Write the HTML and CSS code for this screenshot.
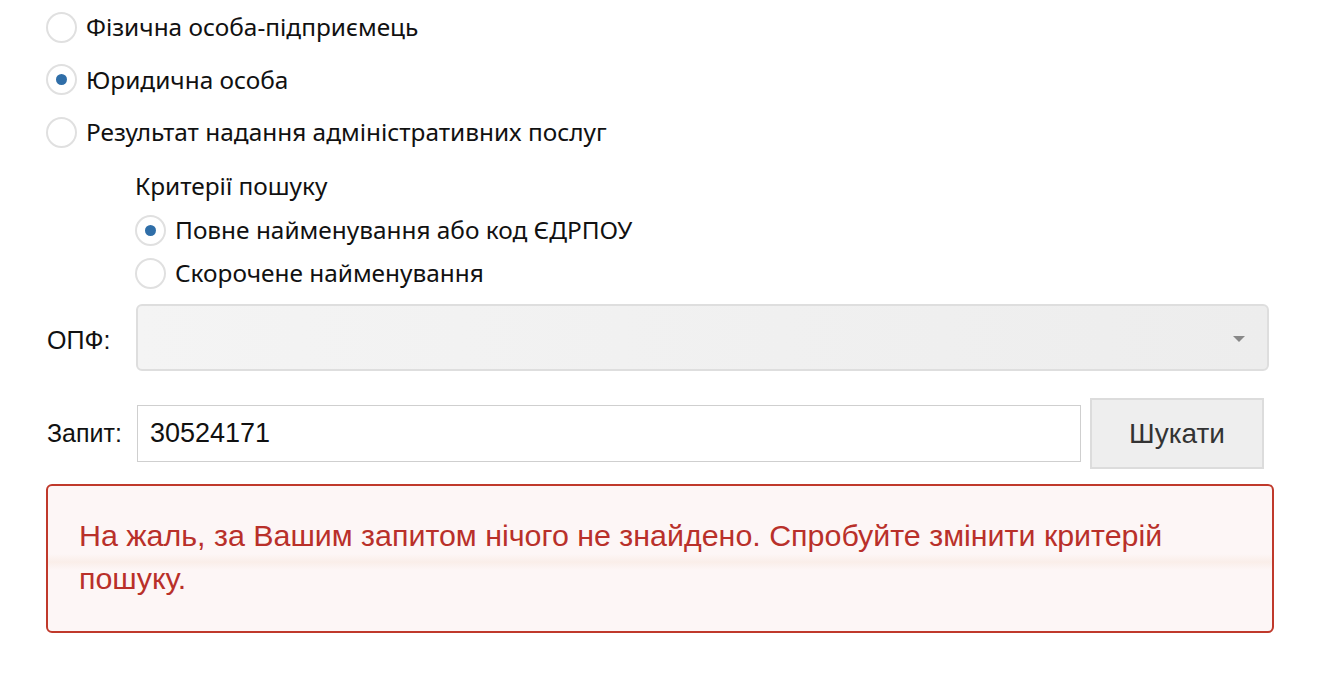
FILE: index.html
```html
<!DOCTYPE html>
<html lang="uk">
<head>
<meta charset="utf-8">
<link rel="stylesheet" href="styles.css">
</head>
<body>
<div class="page">
  <div class="types">
    <label class="radio"><span class="circle"></span><span class="rlabel">Фізична особа-підприємець</span></label>
    <label class="radio"><span class="circle checked"></span><span class="rlabel">Юридична особа</span></label>
    <label class="radio"><span class="circle"></span><span class="rlabel">Результат надання адміністративних послуг</span></label>
  </div>
  <div class="criteria">
    <div class="ctitle">Критерії пошуку</div>
    <div class="subs">
      <label class="radio sub"><span class="circle checked"></span><span class="rlabel">Повне найменування або код ЄДРПОУ</span></label>
      <label class="radio sub"><span class="circle"></span><span class="rlabel">Скорочене найменування</span></label>
    </div>
  </div>
  <div class="row opf">
    <span class="flabel">ОПФ:</span>
    <div class="select"><span class="caret"></span></div>
  </div>
  <div class="row query">
    <span class="flabel">Запит:</span>
    <div class="input">30524171</div>
    <div class="btn">Шукати</div>
  </div>
  <div class="alert">На жаль, за Вашим запитом нічого не знайдено. Спробуйте змінити критерій пошуку.</div>
</div>
</body>
</html>
```
FILE: styles.css
```css
html, body { margin: 0; padding: 0; background: #fff; }
body { font-family: "Noto Sans", "Liberation Sans", sans-serif; color: #111; }
.page { width: 1228px; margin-left: 46px; }

.types { padding-top: 12px; display: flex; flex-direction: column; gap: 22.5px; }
.radio { display: flex; align-items: center; height: 30px; }
.circle {
  width: 31px; height: 31px; box-sizing: border-box;
  border: 2px solid #e0e0e0; border-radius: 50%;
  display: flex; align-items: center; justify-content: center;
  margin-right: 9px; flex: none; background: #fff;
}
.circle.checked::after {
  content: ""; width: 11px; height: 11px; border-radius: 50%; background: #2f6ea8;
}
.rlabel { font-size: 24.4px; line-height: 30px; }
.sub .circle { margin-right: 9px; }

.criteria { margin-left: 89px; margin-top: 24px; }
.ctitle { font-size: 24.4px; line-height: 30px; }
.subs { margin-top: 14px; display: flex; flex-direction: column; gap: 13px; }

.row { display: flex; align-items: center; }
.flabel { width: 90px; flex: none; padding-left: 1px; font-family: "Liberation Sans", Arial, sans-serif; font-size: 25px; color: #111; }
.opf { margin-top: 16px; margin-right: 5px; }
.opf .flabel { width: 89px; padding-top: 6px; }
.select {
  flex: 1; height: 67px; box-sizing: border-box; position: relative;
  border: 2px solid #dedede; border-radius: 6px;
  background: linear-gradient(to right, #f4f4f4, #ededed);
}
.caret {
  position: absolute; right: 22px; top: 30px;
  width: 0; height: 0;
  border-left: 6px solid transparent; border-right: 6px solid transparent;
  border-top: 6px solid #888;
}
.query { margin-top: 27px; margin-right: 10px; }
.input {
  flex: 1; height: 57px; box-sizing: border-box;
  border: 1.5px solid #cfcfcf; padding-left: 12px;
  display: flex; align-items: center;
  font-family: "Liberation Sans", Arial, sans-serif; font-size: 27px; color: #111;
}
.btn {
  margin-left: 9px; width: 174px; height: 71px; box-sizing: border-box;
  background: #eeeeee; border: 2px solid #dcdcdc;
  display: flex; align-items: center; justify-content: center;
  font-family: "Liberation Sans", Arial, sans-serif; font-size: 28px; color: #333;
}
.alert {
  margin-top: 15px; box-sizing: border-box; height: 149px;
  border: 2px solid #c0392b; border-radius: 6px;
  background: linear-gradient(to bottom, #fdf6f6 0, #fdf6f6 68px, #faeee9 76px, #fdf6f6 84px, #fdf6f6 100%);
  padding: 28px 31px 0 31px;
  font-family: "Liberation Sans", Arial, sans-serif; font-size: 30.4px; line-height: 43px;
  color: #b9302a;
}
```
